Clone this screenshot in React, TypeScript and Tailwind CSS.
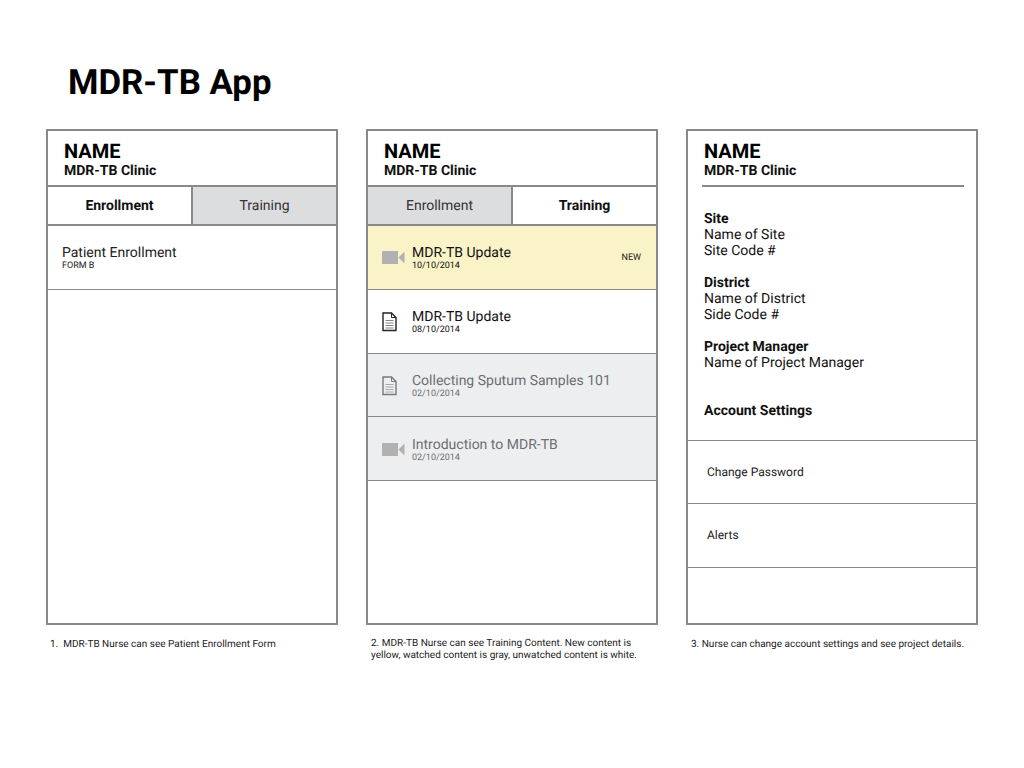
const VideoIcon = () => (
  <svg width="23" height="14" viewBox="0 0 23 14" className="shrink-0">
    <rect x="0" y="0" width="16" height="13" fill="#b1b1b1" />
    <path d="M16.5 6.5 L22.5 0.5 V12.5 Z" fill="#b1b1b1" />
  </svg>
);

const DocIcon = ({ color }: { color: string }) => (
  <svg width="15" height="20" viewBox="0 0 15 20" fill="none" stroke={color} className="shrink-0">
    <path d="M1 1 H9.5 L14 5.5 V18.5 H1 Z" strokeWidth="1.4" />
    <path d="M9.5 1 V5.5 H14" strokeWidth="1" />
    <path d="M3.5 8.5 H11.5 M3.5 11 H11.5 M3.5 13.5 H11.5 M3.5 16 H11.5" strokeWidth="0.8" opacity="0.7" />
  </svg>
);

const Header = () => (
  <div className="h-[54px] pl-[16px] pt-[8px]">
    <div className="text-[20px] leading-[24px] font-bold text-black">NAME</div>
    <div className="text-[14px] leading-[17px] font-bold text-[#111]">MDR-TB Clinic</div>
  </div>
);

const Tabs = ({ active }: { active: "Enrollment" | "Training" }) => (
  <div className="flex h-[41px] border-y-2 border-[#87898b]">
    {(["Enrollment", "Training"] as const).map((tab, i) => (
      <div
        key={tab}
        className={`flex items-center justify-center pt-[1px] text-[14px] ${i === 0 ? "w-[145px] border-r-2 border-[#87898b]" : "flex-1"} ${
          tab === active ? "bg-white font-bold text-[#111]" : "bg-[#dcdddf] text-[#333]"
        }`}
      >
        {tab}
      </div>
    ))}
  </div>
);

type TrainingRow = {
  title: string;
  date: string;
  kind: "video" | "doc";
  state: "new" | "unwatched" | "watched";
};

const trainingRows: TrainingRow[] = [
  { title: "MDR-TB Update", date: "10/10/2014", kind: "video", state: "new" },
  { title: "MDR-TB Update", date: "08/10/2014", kind: "doc", state: "unwatched" },
  { title: "Collecting Sputum Samples 101", date: "02/10/2014", kind: "doc", state: "watched" },
  { title: "Introduction to MDR-TB", date: "02/10/2014", kind: "video", state: "watched" },
];

const Card = ({ children }: { children: React.ReactNode }) => (
  <div className="flex h-[496px] w-[292px] flex-col border-2 border-[#87898b] bg-white">{children}</div>
);

const InfoBlock = ({ title, lines }: { title: string; lines: string[] }) => (
  <div className="mb-[16px] text-[14px] leading-[16px] text-[#111]">
    <div className="font-bold">{title}</div>
    {lines.map((line) => (
      <div key={line}>{line}</div>
    ))}
  </div>
);

export default function App() {
  return (
    <div className="h-[768px] w-[1024px] overflow-hidden bg-white font-['Roboto',sans-serif] [text-rendering:geometricPrecision]">
      <h1 className="pl-[68px] pt-[63px] text-[34.8px] leading-[40px] font-bold text-black">MDR-TB App</h1>

      <div className="mt-[26px] flex gap-[28px] pl-[46px]">
        <div>
          <Card>
            <Header />
            <Tabs active="Enrollment" />
            <div className="h-[64px] border-b border-[#87898b] pl-[14px] pt-[19px]">
              <div className="text-[14px] leading-[16px] text-[#222]">Patient Enrollment</div>
              <div className="text-[9px] leading-[10px] text-[#222]">FORM B</div>
            </div>
          </Card>
          <p className="mt-[14px] pl-[4px] text-[10px] leading-[12px] text-[#222]">1.&nbsp; MDR-TB Nurse can see Patient Enrollment Form</p>
        </div>

        <div>
          <Card>
            <Header />
            <Tabs active="Training" />
            {trainingRows.map((row) => (
              <div
                key={row.title + row.date}
                className={`flex h-[63.75px] items-center border-b border-[#87898b] pt-[2px] ${
                  row.state === "new" ? "bg-[#faf3c8]" : row.state === "watched" ? "bg-[#edeef0]" : "bg-white"
                }`}
              >
                <div className="flex w-[44px] justify-start pl-[14px]">
                  {row.kind === "video" ? (
                    <VideoIcon />
                  ) : (
                    <DocIcon color={row.state === "watched" ? "#77797c" : "#222"} />
                  )}
                </div>
                <div className={`flex-1 ${row.state === "watched" ? "text-[#6d6f72]" : "text-[#111]"}`}>
                  <div className="text-[14px] leading-[16px]">{row.title}</div>
                  <div className="text-[9px] leading-[10px]">{row.date}</div>
                </div>
                {row.state === "new" && <div className="pr-[15px] text-[9px] text-[#222]">NEW</div>}
              </div>
            ))}
          </Card>
          <p className="mt-[13px] w-[280px] pl-[5px] text-[10px] leading-[11.5px] text-[#222]">
            2. MDR-TB Nurse can see Training Content. New content is yellow, watched content is gray, unwatched content is white.
          </p>
        </div>

        <div>
          <Card>
            <Header />
            <div className="mx-[14px] w-[262px] border-t-2 border-[#87898b]" />
            <div className="pl-[16px] pt-[24px]">
              <InfoBlock title="Site" lines={["Name of Site", "Site Code #"]} />
              <InfoBlock title="District" lines={["Name of District", "Side Code #"]} />
              <InfoBlock title="Project Manager" lines={["Name of Project Manager"]} />
              <div className="mt-[32px] text-[14px] leading-[16px] font-bold text-[#111]">Account Settings</div>
            </div>
            <div className="mt-[21px] flex h-[64px] items-center border-y border-[#87898b] pl-[19px] text-[12px] text-[#222]">Change Password</div>
            <div className="flex h-[64px] items-center border-b border-[#87898b] pb-[1px] pl-[19px] text-[12px] text-[#222]">Alerts</div>
          </Card>
          <p className="mt-[14px] pl-[5px] text-[10px] leading-[12px] text-[#222]">3. Nurse can change account settings and see project details.</p>
        </div>
      </div>
    </div>
  );
}
